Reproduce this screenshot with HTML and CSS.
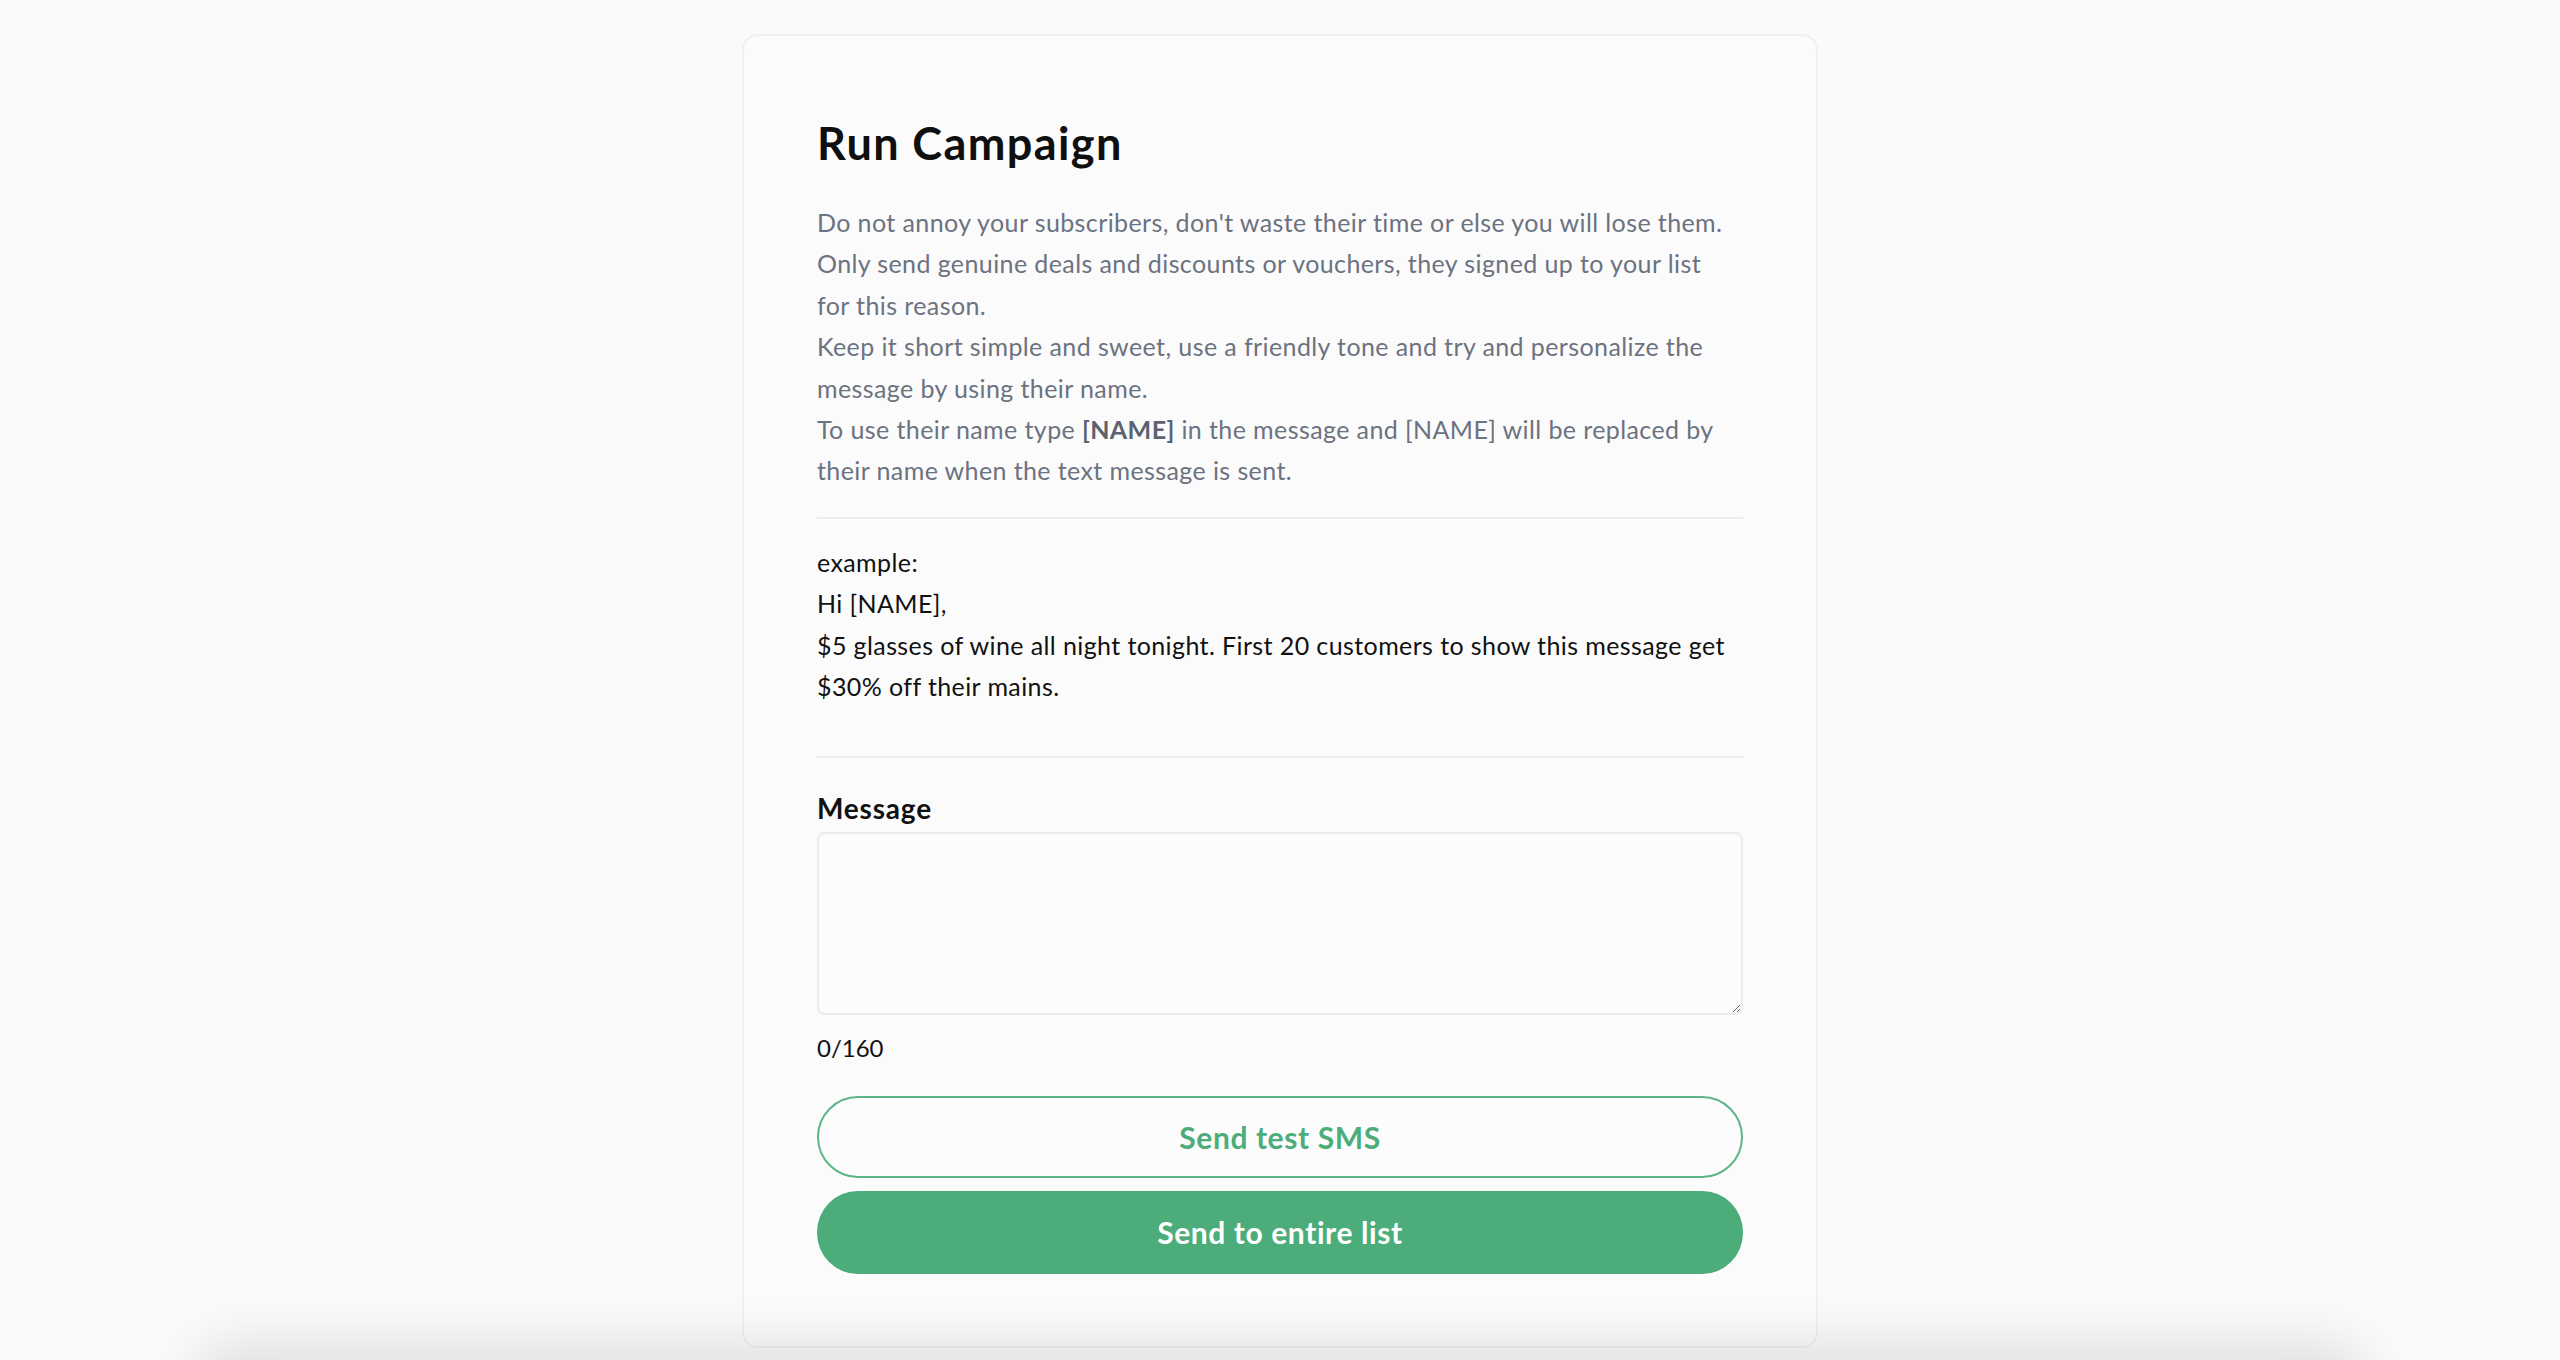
FILE: index.html
```html
<!DOCTYPE html>
<html lang="en">
<head>
<meta charset="utf-8">
<title>Run Campaign</title>
<link rel="stylesheet" href="styles.css">
</head>
<body>
<main class="page">
  <section class="card">
    <h1 class="title">Run Campaign</h1>
    <div class="intro">
      <p>Do not annoy your subscribers, don't waste their time or else you will lose them.</p>
      <p>Only send genuine deals and discounts or vouchers, they signed up to your list for this reason.</p>
      <p>Keep it short simple and sweet, use a friendly tone and try and personalize the message by using their name.</p>
      <p>To use their name type <strong>[NAME]</strong> in the message and [NAME] will be replaced by their name when the text message is sent.</p>
    </div>
    <hr class="divider">
    <div class="example">
      <p>example:</p>
      <p>Hi [NAME],</p>
      <p>$5 glasses of wine all night tonight. First 20 customers to show this message get $30% off their mains.</p>
    </div>
    <hr class="divider divider-lower">
    <label class="label" for="msg">Message</label>
    <textarea id="msg" class="message"></textarea>
    <div class="counter">0/160</div>
    <div class="actions">
      <button class="btn btn-outline" type="button">Send test SMS</button>
      <button class="btn btn-solid" type="button">Send to entire list</button>
    </div>
  </section>
</main>
<div class="bottom-shadow"></div>
</body>
</html>
```
FILE: styles.css
```css
html, body {
  margin: 0;
  padding: 0;
  background: #fafafa;
  font-family: "Lato", "Liberation Sans", sans-serif;
  color: #111;
}

.page {
  display: flex;
  justify-content: center;
  padding-top: 34px;
}

.card {
  box-sizing: border-box;
  width: 1076px;
  background: #fbfbfb;
  border: 2px solid #f0f0f0;
  border-radius: 16px;
  padding: 73px 73px 72px;
  display: flex;
  flex-direction: column;
}

.title {
  margin: 9px 0 34px;
  font-size: 45px;
  line-height: 50px;
  letter-spacing: 1.4px;
  font-weight: 700;
  color: #0f0f0f;
}

.intro {
  padding-right: 15px;
}

.intro p,
.example p {
  margin: 0;
  font-size: 25px;
  line-height: 41.4px;
  letter-spacing: 0.4px;
}

.intro p {
  color: #6b7280;
}

.intro strong {
  color: #5b6270;
  font-weight: 700;
}

.example p {
  color: #111;
}

.divider {
  margin: 25px 0 23px;
  border: 0;
  height: 2px;
  background: #ececec;
}

.divider-lower {
  margin-top: 49px;
  margin-bottom: 30px;
}

.label {
  font-size: 28px;
  line-height: 40px;
  letter-spacing: 0.8px;
  font-weight: 700;
  color: #111;
}

.message {
  box-sizing: border-box;
  margin-top: 4px;
  width: 100%;
  height: 183px;
  border: 2px solid #ebebeb;
  border-radius: 8px;
  background: #fcfcfc;
  resize: vertical;
  font: inherit;
  font-size: 24px;
  padding: 12px 16px;
}

.counter {
  margin-top: 12px;
  font-size: 24px;
  line-height: 41.4px;
  color: #111;
}

.actions {
  margin-top: 27px;
  display: flex;
  flex-direction: column;
  gap: 13px;
}

.btn {
  box-sizing: border-box;
  width: 100%;
  height: 82px;
  border-radius: 41px;
  font-family: inherit;
  font-size: 30px;
  letter-spacing: 0.6px;
  font-weight: 700;
  cursor: pointer;
}

.btn-outline {
  background: #fcfcfc;
  border: 2px solid #5cb487;
  color: #4cad7a;
}

.btn-solid {
  height: 83px;
  background: #4cad7a;
  border: 0;
  color: #fff;
}

.bottom-shadow {
  position: fixed;
  left: 210px;
  right: 210px;
  bottom: -60px;
  height: 60px;
  border-radius: 60px;
  background: #e2e2e2;
  box-shadow: 0 0 50px 20px rgba(0, 0, 0, 0.1);
}
```
